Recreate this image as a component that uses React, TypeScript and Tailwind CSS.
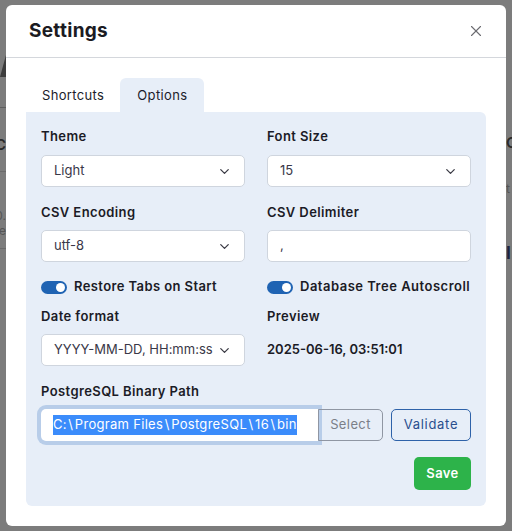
import React from "react";
import { ChevronDown, X } from "lucide-react";

const font = { fontFamily: "Inter, 'Noto Sans', sans-serif" };

function Select({ value }: { value: string }) {
  return (
    <div className="flex h-[32px] items-center justify-between rounded-[5px] border border-[#cfd5de] bg-white pl-[12px] pr-[12px] text-[13px] text-[#3a3848]">
      <span>{value}</span>
      <ChevronDown size={15} strokeWidth={2} className="text-[#3a3a44]" />
    </div>
  );
}

function Toggle() {
  return (
    <div className="flex h-[13px] w-[26px] items-center justify-end rounded-full bg-[#1f63b3] pr-[2px]">
      <div className="h-[9px] w-[9px] rounded-full bg-white" />
    </div>
  );
}

function Label({ children }: { children: React.ReactNode }) {
  return <div className="h-[20px] text-[13px] font-semibold leading-[20px] tracking-[0.4px] text-[#1b1b26]">{children}</div>;
}

function Slash() {
  return <span className="px-[1.5px]">\</span>;
}

export default function App() {
  return (
    <div style={font} className="relative h-[531px] w-[512px] overflow-hidden bg-[#7c7c7c]">
      {/* faint underlying page */}
      <div className="absolute left-0 top-[55px] h-[22px] w-[6px] bg-[#3c3c3c] [clip-path:polygon(100%_0,100%_100%,0_100%)]" />
      <div className="absolute left-0 top-[107px] h-px w-[6px] bg-[#5e5e5e]" />
      <div className="absolute left-0 top-[136px] flex h-[18px] w-[6px] justify-end overflow-hidden">
        <div className="text-[15px] font-semibold leading-[18px] text-[#2a2a2a]">C</div>
      </div>
      <div className="absolute left-0 top-[171px] h-px w-[6px] bg-[#6a6a6a]" />
      <div className="absolute left-0 top-[208px] flex h-[30px] w-[6px] flex-col items-end overflow-hidden text-[12px] leading-[15px] text-[#555]">
        <div>0.</div>
        <div>ce</div>
      </div>
      <div className="absolute left-0 top-[248px] h-px w-[6px] bg-[#6a6a6a]" />
      <div className="absolute left-[506px] top-[135px] h-[16px] w-[6px] overflow-hidden">
        <div className="text-[15px] font-semibold leading-[16px] text-[#2a2a2a]">C</div>
      </div>
      <div className="absolute left-[506px] top-[175px] h-[44px] w-[6px] overflow-hidden text-[12px] leading-[28px] text-[#555]">
        <div>t</div>
      </div>
      <div className="absolute left-[506px] top-[245px] h-[17px] w-[6px] overflow-hidden">
        <div className="text-[17px] font-bold leading-[17px] text-[#1c2440]">I</div>
      </div>

      {/* modal */}
      <div className="absolute left-[6px] top-[5px] flex h-[521px] w-[500px] flex-col rounded-[6px] bg-white">
        <div className="flex h-[53px] items-center justify-between border-b border-[#d4d7dc] pl-[23px] pr-[21px]">
          <span className="text-[19px] font-bold tracking-[0.3px] text-[#1b1b22]">Settings</span>
          <X size={18} strokeWidth={1.5} className="text-[#6b6b70]" />
        </div>
        <div className="flex flex-1 flex-col px-[20px] pb-[20px] pt-[20px]">
          <div className="flex h-[34px] items-stretch text-[13px] tracking-[0.35px] text-[#1c1c2a]">
            <div className="flex items-center px-[16px] pt-[2px]">Shortcuts</div>
            <div className="flex items-center rounded-t-[6px] bg-[#e7eef8] px-[17px] pt-[2px]">Options</div>
          </div>
          <div className="flex flex-1 flex-col rounded-b-[6px] rounded-tr-[6px] bg-[#e7eef8] px-[15px] pt-[14px]">
            <div className="grid grid-cols-2 gap-x-[22px]">
              <div>
                <Label>Theme</Label>
                <div className="mt-[9px]"><Select value="Light" /></div>
              </div>
              <div>
                <Label>Font Size</Label>
                <div className="mt-[9px]"><Select value="15" /></div>
              </div>
              <div className="mt-[15px]">
                <Label>CSV Encoding</Label>
                <div className="mt-[8px]"><Select value="utf-8" /></div>
              </div>
              <div className="mt-[15px]">
                <Label>CSV Delimiter</Label>
                <div className="mt-[8px] flex h-[32px] items-center rounded-[5px] border border-[#cfd5de] bg-white px-[12px] text-[13px] text-[#3a3848]">,</div>
              </div>
              <div className="mt-[15px] flex h-[20px] items-center gap-[7px]">
                <Toggle />
                <span className="text-[13px] font-semibold tracking-[0.4px] text-[#1b1b26]">Restore Tabs on Start</span>
              </div>
              <div className="mt-[15px] flex h-[20px] items-center gap-[7px]">
                <Toggle />
                <span className="text-[13px] font-semibold tracking-[0.5px] text-[#1b1b26]">Database Tree Autoscroll</span>
              </div>
              <div className="mt-[9px]">
                <Label>Date format</Label>
                <div className="mt-[8px]"><Select value="YYYY-MM-DD, HH:mm:ss" /></div>
              </div>
              <div className="mt-[9px]">
                <Label>Preview</Label>
                <div className="mt-[8px] flex h-[32px] items-center text-[13px] font-semibold text-[#1b1b26]">2025-06-16, 03:51:01</div>
              </div>
            </div>
            <div className="mt-[15px]">
              <Label>PostgreSQL Binary Path</Label>
              <div className="mt-[8px] flex items-center">
                <div className="flex h-[32px] w-[277px] items-center rounded-l-[5px] bg-white pl-[12px] text-[13px] shadow-[0_0_0_4px_#b8cde9]">
                  <span className="bg-[#3b8cfb] tracking-[0.3px] text-white">
                    C:<Slash />Program Files<Slash />PostgreSQL<Slash />16<Slash />bin
                  </span>
                </div>
                <div className="flex h-[32px] w-[65px] items-center justify-center rounded-r-[5px] border border-[#8f96a3] text-[13px] tracking-[0.4px] text-[#7b7f88]">Select</div>
                <div className="ml-[8px] flex h-[32px] w-[80px] items-center justify-center rounded-[5px] border border-[#2e62a9] text-[13px] tracking-[0.7px] text-[#2a4f8e]">Validate</div>
              </div>
            </div>
            <div className="mt-[16px] flex justify-end">
              <div className="flex h-[33px] w-[57px] items-center justify-center rounded-[5px] bg-[#2db34a] text-[13px] font-semibold tracking-[0.4px] text-white">Save</div>
            </div>
          </div>
        </div>
      </div>
    </div>
  );
}
